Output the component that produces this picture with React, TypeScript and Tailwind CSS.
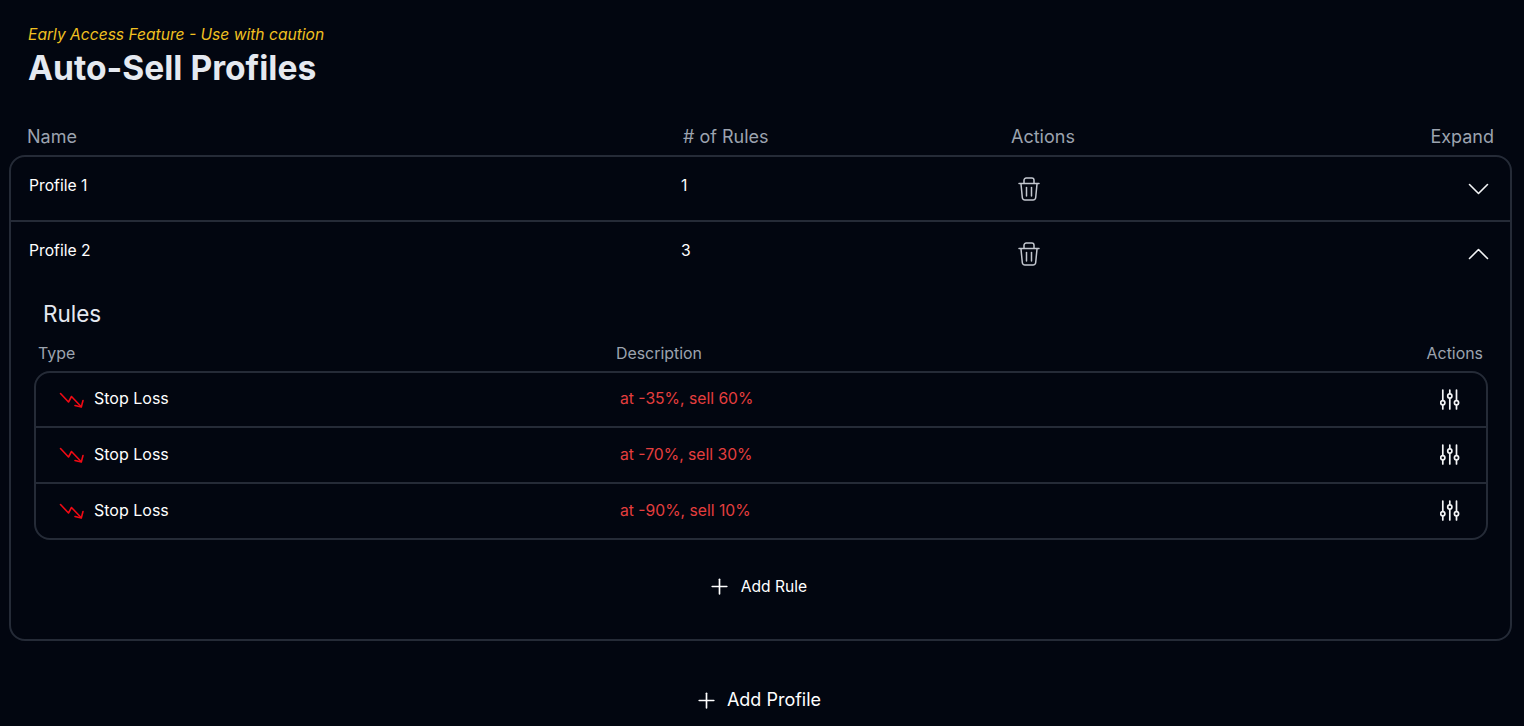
import { Plus } from "lucide-react";

const TrashIcon = () => (
  <svg width="22" height="26" viewBox="0 0 22 26" fill="none" stroke="#c3c7cf" strokeWidth="1.5" strokeLinecap="round" strokeLinejoin="round">
    <path d="M1 7.5h20" />
    <path d="M6 7V4.2c0-1.2 .9-2.2 2.2-2.2h5.6c1.3 0 2.2 1 2.2 2.2V7" />
    <path d="M3 8l1.3 13.5c.2 1.5 1.2 2.5 2.7 2.5h8c1.5 0 2.5-1 2.7-2.5L19 8" />
    <path d="M8.5 11.5v8.5" />
    <path d="M13.5 11.5v8.5" />
  </svg>
);

const Chevron = ({ up }: { up: boolean }) => (
  <svg width="21" height="12" viewBox="0 0 21 12" fill="none" stroke="#f3f4f6" strokeWidth="1.6" strokeLinecap="round" strokeLinejoin="round">
    <path d={up ? "M1.5 10.5L10.5 1.5l9 9" : "M1.5 1.5L10.5 10.5l9-9"} />
  </svg>
);

const TrendDown = () => (
  <svg width="26" height="18" viewBox="0 0 26 18" fill="none" stroke="#f00a14" strokeWidth="1.6" strokeLinecap="round" strokeLinejoin="round">
    <path d="M1.5 2.5l8 8.5 3-5.5 9.5 10" />
    <path d="M24 9.5l-1.7 6.5-6.3-1.5" />
  </svg>
);

const Sliders = () => (
  <svg width="20" height="24" viewBox="0 0 20 24" fill="none" stroke="#f3f4f6" strokeWidth="1.7" strokeLinecap="round">
    <path d="M2.8 2v19M9.8 2v19M16.5 2v19" />
    <circle cx="2.8" cy="14.7" r="2.1" fill="#020610" />
    <circle cx="9.8" cy="8" r="2.1" fill="#020610" />
    <circle cx="16.5" cy="14.7" r="2.1" fill="#020610" />
  </svg>
);

const ProfileRow = ({ name, rules, open }: { name: string; rules: number; open: boolean }) => (
  <div className="grid grid-cols-[652px_337px_1fr] items-center h-[63px] pl-[18px] pr-[21px] text-[15.7px] text-white">
    <div className="-mt-[6px]">{name}</div>
    <div className="-mt-[6px]">{rules}</div>
    <div className="flex justify-between items-center">
      <TrashIcon />
      <Chevron up={open} />
    </div>
  </div>
);

const RuleRow = ({ text, className }: { text: string; className: string }) => (
  <div className={`grid grid-cols-[561px_1fr_auto] items-center pl-[23px] pr-[26px] text-base ${className}`}>
    <div className="flex items-center gap-[9px] text-white">
      <TrendDown />
      <span className="-mt-[3px]">Stop Loss</span>
    </div>
    <div className="-mt-[1px] text-[15.7px] text-[#e53e3e]">{text}</div>
    <Sliders />
  </div>
);

export default function App() {
  return (
    <div className="h-[726px] overflow-hidden bg-[#020610] font-['Inter',sans-serif] pl-[9px] pr-[12px] pt-[25px]">
      <div className="pl-[19px]">
        <p className="text-[15.6px] leading-[20px] italic text-[#f0c020]">Early Access Feature - Use with caution</p>
        <h1 className="text-[33.6px] leading-[45px] font-bold text-[#e5e9f0]">Auto-Sell Profiles</h1>
      </div>
      <div className="grid grid-cols-[656px_328px_1fr] pl-[18px] pr-[18px] mt-[34px] h-[31px] text-lg leading-[26px] text-[#9ca3af]">
        <div>Name</div>
        <div># of Rules</div>
        <div className="flex justify-between">
          <span>Actions</span>
          <span>Expand</span>
        </div>
      </div>
      <div className="border-2 border-[#252b37] rounded-[16px] h-[486px]">
        <div className="border-b-2 border-[#252b37]">
          <ProfileRow name="Profile 1" rules={1} open={false} />
        </div>
        <ProfileRow name="Profile 2" rules={3} open={true} />
        <div className="pl-[23px] pr-[22px]">
          <h2 className="mt-[15px] pl-[9px] text-[22.5px] leading-[28px] text-[#e5e9f0]">Rules</h2>
          <div className="grid grid-cols-[578px_1fr_auto] pl-[4px] pr-[5px] mt-[15px] h-[28px] text-[15.9px] leading-[21px] text-[#9ca3af]">
            <div>Type</div>
            <div>Description</div>
            <div>Actions</div>
          </div>
          <div className="border-2 border-[#252b37] rounded-[16px]">
            <RuleRow text="at -35%, sell 60%" className="h-[55px] border-b-2 border-[#252b37]" />
            <RuleRow text="at -70%, sell 30%" className="h-[56px] border-b-2 border-[#252b37]" />
            <RuleRow text="at -90%, sell 10%" className="h-[54px]" />
          </div>
          <div className="flex justify-center items-center gap-[9px] mt-[34px] pr-[8px] text-[15.6px] leading-[24px] text-white">
            <Plus size={25} strokeWidth={1.6} />
            <span>Add Rule</span>
          </div>
        </div>
      </div>
      <div className="flex justify-center items-center gap-[8px] mt-[45px] pr-[6px] text-lg leading-[28px] text-white">
        <Plus size={25} strokeWidth={1.6} />
        <span>Add Profile</span>
      </div>
    </div>
  );
}
